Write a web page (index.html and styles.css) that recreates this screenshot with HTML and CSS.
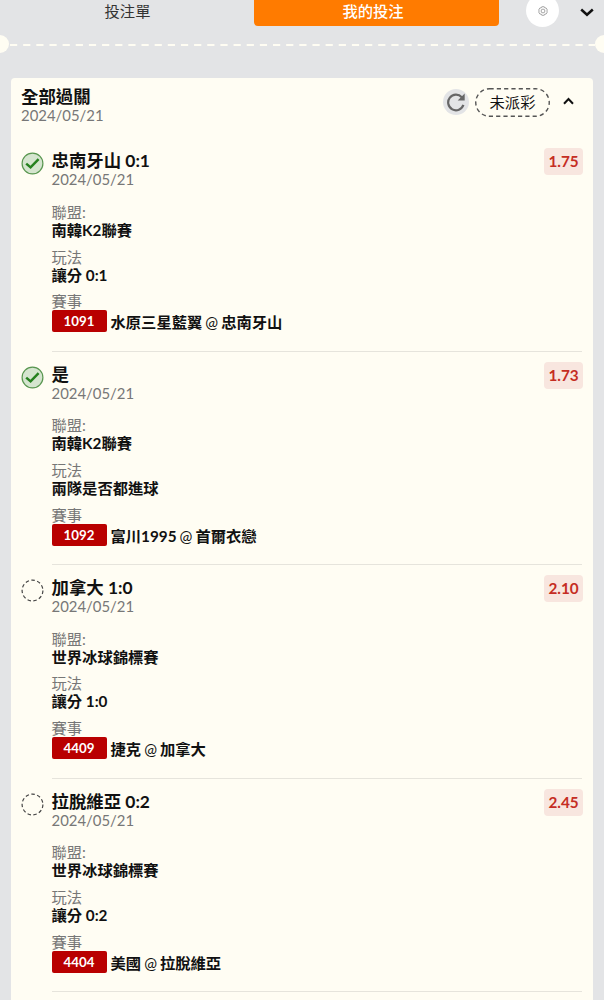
FILE: index.html
```html
<!DOCTYPE html>
<html lang="zh-Hant">
<head>
<meta charset="utf-8">
<title>我的投注</title>
<link rel="stylesheet" href="styles.css">
</head>
<body>
<header class="tabs">
  <div class="tab">投注單</div>
  <div class="tab tab-active">我的投注</div>
  <div class="settings">
    <svg width="10" height="10" viewBox="0 0 20 20" fill="none" stroke="#777" stroke-width="1.3"><path d="M7.5 1.5h5l1 2.2 2.8.3 2.4 4-1.2 2 1.2 2-2.4 4-2.8.3-1 2.2h-5l-1-2.2-2.8-.3-2.4-4 1.2-2-1.2-2 2.4-4 2.8-.3z"/><circle cx="10" cy="10" r="3.8"/></svg>
  </div>
  <svg class="chevron" width="14" height="9" viewBox="0 0 14 9" fill="none" stroke="#111" stroke-width="2.5"><path d="M1.2 1.5 7 6.7l5.8-5.2"/></svg>
</header>
<div class="tear">
  <span class="notch"></span>
  <svg class="dashes" width="586" height="2"><path d="M1 1H586" stroke="#fffdf3" stroke-width="2" stroke-dasharray="7.2 5.95"/></svg>
  <span class="notch"></span>
</div>
<main class="card">
  <div class="card-head">
    <div class="card-title"><div class="title">全部過關</div><div class="date">2024/05/21</div></div>
    <div class="refresh"><svg width="20" height="20" viewBox="0 0 20 20"><path d="M15.8 5.3A7.8 7.8 0 1 0 17.4 12.9" fill="none" stroke="#666" stroke-width="2.2"/><path d="M18.7 1.5v7h-7z" fill="#666"/></svg></div>
    <div class="status"><svg class="status-line" width="75" height="29"><rect x=".75" y=".75" width="73.5" height="27.5" rx="13.75" fill="none" stroke="#555" stroke-width="1.4" stroke-dasharray="4.2 3.1"/></svg><span>未派彩</span></div>
    <svg class="collapse" width="11" height="8" viewBox="0 0 11 8" fill="none" stroke="#111" stroke-width="2"><path d="M1 6.7 5.5 2 10 6.7"/></svg>
  </div>

  <section class="bet">
    <svg class="mark" width="23" height="23" viewBox="0 0 23 23"><circle cx="11.5" cy="11.5" r="10.4" fill="#d5e5cf" stroke="#58964f" stroke-width="1.2"/><path d="m5.2 11.6 4.4 3.8 8-8.2" fill="none" stroke="#26811f" stroke-width="2.5"/></svg>
    <div class="bet-body">
      <div class="bet-top"><div><div class="title">忠南牙山 0:1</div><div class="date">2024/05/21</div></div><div class="odds">1.75</div></div>
      <dl class="details"><dt>聯盟:</dt><dd>南韓K2聯賽</dd><dt>玩法</dt><dd>讓分 0:1</dd><dt>賽事</dt></dl>
      <div class="match"><span class="code">1091</span><span>水原三星藍翼 <i>@</i> 忠南牙山</span></div>
    </div>
  </section>

  <section class="bet">
    <svg class="mark" width="23" height="23" viewBox="0 0 23 23"><circle cx="11.5" cy="11.5" r="10.4" fill="#d5e5cf" stroke="#58964f" stroke-width="1.2"/><path d="m5.2 11.6 4.4 3.8 8-8.2" fill="none" stroke="#26811f" stroke-width="2.5"/></svg>
    <div class="bet-body">
      <div class="bet-top"><div><div class="title">是</div><div class="date">2024/05/21</div></div><div class="odds">1.73</div></div>
      <dl class="details"><dt>聯盟:</dt><dd>南韓K2聯賽</dd><dt>玩法</dt><dd>兩隊是否都進球</dd><dt>賽事</dt></dl>
      <div class="match"><span class="code">1092</span><span>富川1995 <i>@</i> 首爾衣戀</span></div>
    </div>
  </section>

  <section class="bet">
    <svg class="mark" width="23" height="23" viewBox="0 0 23 23"><circle cx="11.5" cy="11.5" r="10.4" fill="none" stroke="#444" stroke-width="1.2" stroke-dasharray="3.5 2.44"/></svg>
    <div class="bet-body">
      <div class="bet-top"><div><div class="title">加拿大 1:0</div><div class="date">2024/05/21</div></div><div class="odds">2.10</div></div>
      <dl class="details"><dt>聯盟:</dt><dd>世界冰球錦標賽</dd><dt>玩法</dt><dd>讓分 1:0</dd><dt>賽事</dt></dl>
      <div class="match"><span class="code">4409</span><span>捷克 <i>@</i> 加拿大</span></div>
    </div>
  </section>

  <section class="bet">
    <svg class="mark" width="23" height="23" viewBox="0 0 23 23"><circle cx="11.5" cy="11.5" r="10.4" fill="none" stroke="#444" stroke-width="1.2" stroke-dasharray="3.5 2.44"/></svg>
    <div class="bet-body">
      <div class="bet-top"><div><div class="title">拉脫維亞 0:2</div><div class="date">2024/05/21</div></div><div class="odds">2.45</div></div>
      <dl class="details"><dt>聯盟:</dt><dd>世界冰球錦標賽</dd><dt>玩法</dt><dd>讓分 0:2</dd><dt>賽事</dt></dl>
      <div class="match"><span class="code">4404</span><span>美國 <i>@</i> 拉脫維亞</span></div>
    </div>
  </section>
</main>
</body>
</html>
```
FILE: styles.css
```css
* { box-sizing: border-box; }
body {
  margin: 0;
  height: 1000px;
  overflow: hidden;
  background: #e3e4e6;
  color: #111;
  font-family: Lato, "Noto Sans CJK TC", sans-serif;
  font-size: 15.3px;
}
svg { display: block; flex: none; }
.tabs { display: flex; height: 26px; }
.tab {
  width: 254px;
  height: 26px;
  padding-left: 1px;
  line-height: 22px;
  text-align: center;
  color: #333;
}
.tab-active {
  width: 245px;
  margin-right: 27px;
  padding-right: 8px;
  background: #ff7b00;
  color: #fff;
  border-radius: 0 0 4px 4px;
  font-weight: 500;
}
.settings {
  display: flex;
  justify-content: center;
  align-items: flex-end;
  width: 33px;
  height: 33px;
  margin-top: -6px;
  padding-bottom: 11px;
  background: #fff;
  border-radius: 50%;
}
.chevron { margin: 8px 0 0 21px; }
.tear {
  display: flex;
  align-items: center;
  justify-content: space-between;
  height: 18px;
  margin: 9px -9px 0;
}
.dashes { margin-top: 1px; }
.notch {
  flex: none;
  width: 18px;
  height: 18px;
  background: #fffdf3;
  border-radius: 50%;
}
.card {
  height: 930px;
  margin: 25.4px 11px 0;
  background: #fffdf3;
  border-radius: 4px;
}
.card-head { display: flex; height: 60px; padding: 7.6px 0 0 10px; }
.card-title { width: 422px; }
.title {
  height: 22px;
  line-height: 22px;
  font-size: 17.4px;
  font-weight: 700;
  white-space: nowrap;
}
.date {
  height: 16px;
  margin-top: -1px;
  line-height: 16px;
  font-size: 14.9px;
  color: #777;
}
.refresh {
  display: flex;
  align-items: center;
  justify-content: center;
  width: 26px;
  height: 26px;
  margin-top: 3px;
  background: #e3e4e6;
  border-radius: 50%;
}
.status {
  position: relative;
  width: 75px;
  height: 29px;
  margin: 2px 13px 0 6px;
  line-height: 29px;
  text-align: center;
}
.status-line { position: absolute; left: 0; top: 0; }
.collapse { margin-top: 11px; }
.bet { display: flex; height: 213.4px; padding: 12px 11px 0 9.5px; }
.mark { margin: 2px 8px 0 0; }
.bet-body { flex: 1; height: 201.4px; border-bottom: 1px solid #e6e4dc; }
.bet-top { display: flex; justify-content: space-between; height: 52.6px; }
.odds {
  width: 39px;
  height: 27px;
  margin: -2px -1px 0 0;
  line-height: 27px;
  text-align: center;
  background: #f8e6df;
  border-radius: 4px;
  color: #c52d23;
  font-weight: 700;
}
.details { margin: 0; }
.details dt { height: 18px; line-height: 18px; color: #777; }
.details dd {
  height: 19px;
  margin: 0 0 7.7px;
  line-height: 19px;
  font-weight: 700;
}
.match {
  display: flex;
  align-items: center;
  height: 22px;
  font-weight: 700;
  white-space: nowrap;
  word-spacing: -.7px;
}
.match i { font-style: normal; font-weight: 400; }
.code {
  width: 55px;
  height: 22px;
  margin-right: 4px;
  line-height: 22px;
  text-align: center;
  font-size: 13.3px;
  color: #fff;
  background: #b90000;
  border-radius: 2px;
}
```
